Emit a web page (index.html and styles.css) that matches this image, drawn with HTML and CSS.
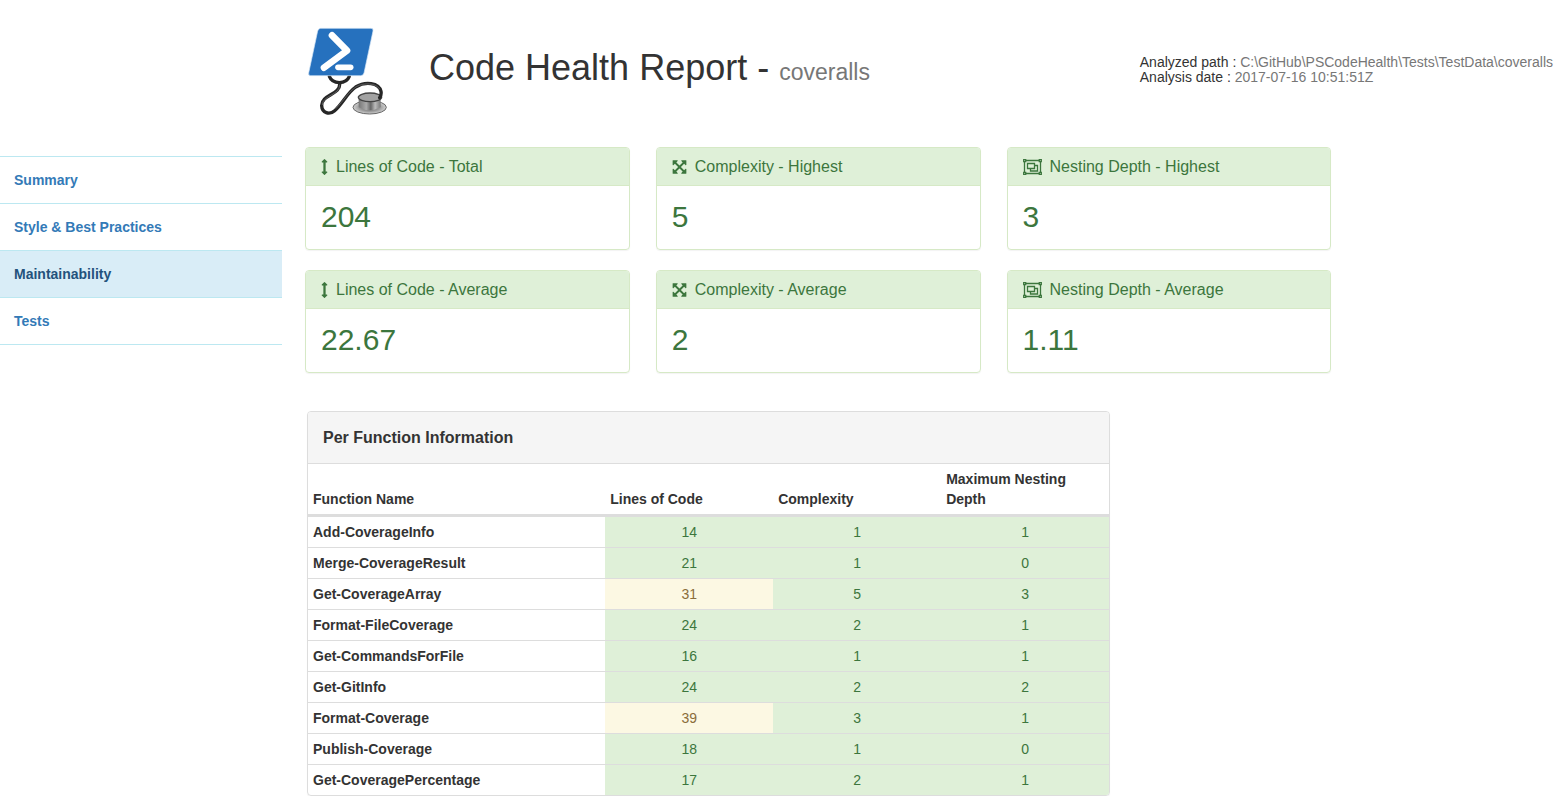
FILE: index.html
```html
<!DOCTYPE html>
<html lang="en">
<head>
<meta charset="utf-8">
<title>Code Health Report - coveralls</title>
<link rel="stylesheet" href="styles.css">
</head>
<body>
<svg class="sprite" aria-hidden="true">
  <symbol id="arrows-v" viewBox="512 0 768 1792"><path d="M1216 320q0 26-19 45t-45 19h-128v1024h128q26 0 45 19t19 45-19 45l-256 256q-19 19-45 19t-45-19l-256-256q-19-19-19-45t19-45 45-19h128v-1024h-128q-26 0-45-19t-19-45 19-45l256-256q19-19 45-19t45 19l256 256q19 19 19 45z"/></symbol>
  <symbol id="arrows-alt" viewBox="128 0 1536 1792"><path d="M1411 541l-355 355 355 355 144-144q29-31 70-14 39 17 39 59v448q0 26-19 45t-45 19h-448q-42 0-59-40-17-39 14-69l144-144-355-355-355 355 144 144q31 30 14 69-17 40-59 40h-448q-26 0-45-19t-19-45v-448q0-42 40-59 39-17 69 14l144 144 355-355-355-355-144 144q-19 19-45 19-12 0-24-5-40-17-40-59v-448q0-26 19-45t45-19h448q42 0 59 40 17 39-14 69l-144 144 355 355 355-355-144-144q-31-30-14-69 17-40 59-40h448q26 0 45 19t19 45v448q0 42-39 59-13 5-25 5-26 0-45-19z"/></symbol>
  <symbol id="object-group" viewBox="0 0 19 16"><g fill="none" stroke="currentColor" stroke-width="1.3"><path d="M3 1.500h13M3 14.500h13M1.500 3v10M17.500 3v10"/><path d="M.7.7h2v2h-2zM16.300.7h2v2h-2zM.7 13.300h2v2h-2zM16.300 13.300h2v2h-2z"/><path d="M4.500 4.500h7v5h-7zM12 6.500h2.500v5.500h-7V10"/></g></symbol>
</svg>
<header class="header">
  <svg class="logo" viewBox="39 36 237 264" role="img" aria-label="PSCodeHealth">
    <defs>
      <linearGradient id="metal" x1="0" x2="1"><stop offset="0" stop-color="#777"/><stop offset=".35" stop-color="#aaa"/><stop offset=".55" stop-color="#666"/><stop offset=".75" stop-color="#bbb"/><stop offset="1" stop-color="#777"/></linearGradient>
      <radialGradient id="disc"><stop offset="0" stop-color="#666"/><stop offset=".6" stop-color="#999"/><stop offset="1" stop-color="#d2d2d2"/></radialGradient>
    </defs>
    <ellipse cx="224" cy="277" rx="50" ry="20" fill="url(#disc)" stroke="#666" stroke-width="3"/>
    <path d="M191 248v29q32 18 66 0v-29z" fill="url(#metal)"/>
    <ellipse cx="225" cy="247" rx="35" ry="13" fill="#a2a2a2" stroke="#444" stroke-width="4"/>
    <g fill="none" stroke="#262626" stroke-width="10" stroke-linecap="round">
      <path d="M103 184Q110 202 133 203Q156 202 163 184"/>
      <path d="M134 204C138 240 79 238 80 272C81 294 103 301 119 287C143 267 155 235 182 216C210 198 252 202 258 229Q260 239 254 248"/>
    </g>
    <path d="M134 209C136 240 81 242 82 270M122 281C146 257 160 231 184 215C207 202 243 204 254 222" fill="none" stroke="#777" stroke-width="2"/>
    <path d="M77 40H228Q236 40 234 48L207 174Q205 182 197 182H47Q39 182 41 174L68 48Q70 40 77 40Z" fill="#2671be" stroke="#d5e6f6" stroke-width="2"/>
    <path d="M111 61L156 107L87 158" fill="none" stroke="#fff" stroke-width="20" stroke-linecap="round" stroke-linejoin="round"/>
    <path d="M129 157H167" stroke="#fff" stroke-width="17" stroke-linecap="round"/>
  </svg>
  <h1 class="title">Code Health Report - <small>coveralls</small></h1>
  <div class="meta">
    <div>Analyzed path : <span>C:\GitHub\PSCodeHealth\Tests\TestData\coveralls</span></div>
    <div>Analysis date : <span>2017-07-16 10:51:51Z</span></div>
  </div>
</header>
<div class="layout">
  <nav class="sidebar">
    <a href="#summary">Summary</a>
    <a href="#style">Style &amp; Best Practices</a>
    <a href="#maintainability" class="active" aria-current="page">Maintainability</a>
    <a href="#tests">Tests</a>
  </nav>
  <main class="main">
    <section class="cards">
      <article class="card"><h2><svg class="icon-v"><use href="#arrows-v"/></svg>Lines of Code - Total</h2><p>204</p></article>
      <article class="card"><h2><svg class="icon-alt"><use href="#arrows-alt"/></svg>Complexity - Highest</h2><p>5</p></article>
      <article class="card"><h2><svg class="icon-group"><use href="#object-group"/></svg>Nesting Depth - Highest</h2><p>3</p></article>
      <article class="card"><h2><svg class="icon-v"><use href="#arrows-v"/></svg>Lines of Code - Average</h2><p>22.67</p></article>
      <article class="card"><h2><svg class="icon-alt"><use href="#arrows-alt"/></svg>Complexity - Average</h2><p>2</p></article>
      <article class="card"><h2><svg class="icon-group"><use href="#object-group"/></svg>Nesting Depth - Average</h2><p>1.11</p></article>
    </section>
    <section class="panel">
      <h2 id="functions">Per Function Information</h2>
      <table aria-labelledby="functions">
        <thead><tr><th scope="col" class="name">Function Name</th><th scope="col">Lines of Code</th><th scope="col">Complexity</th><th scope="col">Maximum Nesting Depth</th></tr></thead>
        <tbody>
          <tr><th scope="row">Add-CoverageInfo</th><td>14</td><td>1</td><td>1</td></tr>
          <tr><th scope="row">Merge-CoverageResult</th><td>21</td><td>1</td><td>0</td></tr>
          <tr><th scope="row">Get-CoverageArray</th><td class="warning">31</td><td>5</td><td>3</td></tr>
          <tr><th scope="row">Format-FileCoverage</th><td>24</td><td>2</td><td>1</td></tr>
          <tr><th scope="row">Get-CommandsForFile</th><td>16</td><td>1</td><td>1</td></tr>
          <tr><th scope="row">Get-GitInfo</th><td>24</td><td>2</td><td>2</td></tr>
          <tr><th scope="row">Format-Coverage</th><td class="warning">39</td><td>3</td><td>1</td></tr>
          <tr><th scope="row">Publish-Coverage</th><td>18</td><td>1</td><td>0</td></tr>
          <tr><th scope="row">Get-CoveragePercentage</th><td>17</td><td>2</td><td>1</td></tr>
        </tbody>
      </table>
    </section>
  </main>
</div>
</body>
</html>
```
FILE: styles.css
```css
* { box-sizing: border-box; }
body {
  margin: 0;
  background: #fff;
  color: #333;
  font: 14px/20px "Liberation Sans", Arial, sans-serif;
}
h1, h2, p { margin: 0; font-weight: 400; }
.sprite { display: none; }

.header {
  display: flex;
  align-items: center;
  padding: 27px 2px 32px 308px;
}
.logo { width: 79px; height: 88px; flex: none; margin-right: 42px; }
.title { flex: 1; padding-bottom: 2px; font-size: 36px; line-height: 40px; }
.title small { font-size: 23px; color: #777; }
.meta { padding-bottom: 2px; line-height: 15px; white-space: nowrap; }
.meta span { color: #777; }

.layout { display: flex; align-items: flex-start; }
.sidebar {
  flex: none;
  width: 282px;
  margin-top: 9px;
  border-top: 1px solid #bce8f1;
}
.sidebar a {
  display: block;
  padding: 13px 14px;
  border-bottom: 1px solid #bce8f1;
  color: #337ab7;
  font-weight: 700;
  text-decoration: none;
}
.sidebar a.active { background: #d9edf7; color: #23527c; }

.main { flex: 1; padding-left: 23px; }
.cards {
  display: grid;
  grid-template-columns: repeat(3, 1fr);
  gap: 20px 26px;
  width: 82.1%;
}
.card, .panel {
  border: 1px solid #d6e9c6;
  border-radius: 4px;
  box-shadow: 0 1px 1px rgba(0, 0, 0, .05);
  overflow: hidden;
}
.card { color: #3c763d; }
.card h2 {
  display: flex;
  align-items: center;
  gap: 8px;
  padding: 10px 15px 9px;
  background: #dff0d8;
  border-bottom: 1px solid #d6e9c6;
  font-size: 16px;
  line-height: 18px;
}
.card svg { height: 16px; fill: currentColor; }
.card .icon-v { width: 7px; }
.card .icon-alt { width: 15px; }
.card .icon-group { width: 19px; }
.card p { padding: 14px 15px 16px; font-size: 30px; line-height: 33px; }

.panel {
  width: 64.25%;
  margin: 38px 0 0 2px;
  border-color: #ddd;
}
.panel h2 {
  padding: 15px;
  background: #f5f5f5;
  border-bottom: 1px solid #ddd;
  font-size: 16px;
  font-weight: 700;
  line-height: 21px;
}
table { width: 100%; table-layout: fixed; border-collapse: separate; border-spacing: 0; }
th, td { padding: 5px; text-align: left; }
thead th { border-bottom: 2px solid #ddd; vertical-align: bottom; }
thead .name { width: 37.1%; }
tbody th, td { border-top: 1px solid #ddd; }
td { background: #dff0d8; color: #3c763d; text-align: center; }
td.warning { background: #fcf8e3; color: #8a6d3b; }
```
